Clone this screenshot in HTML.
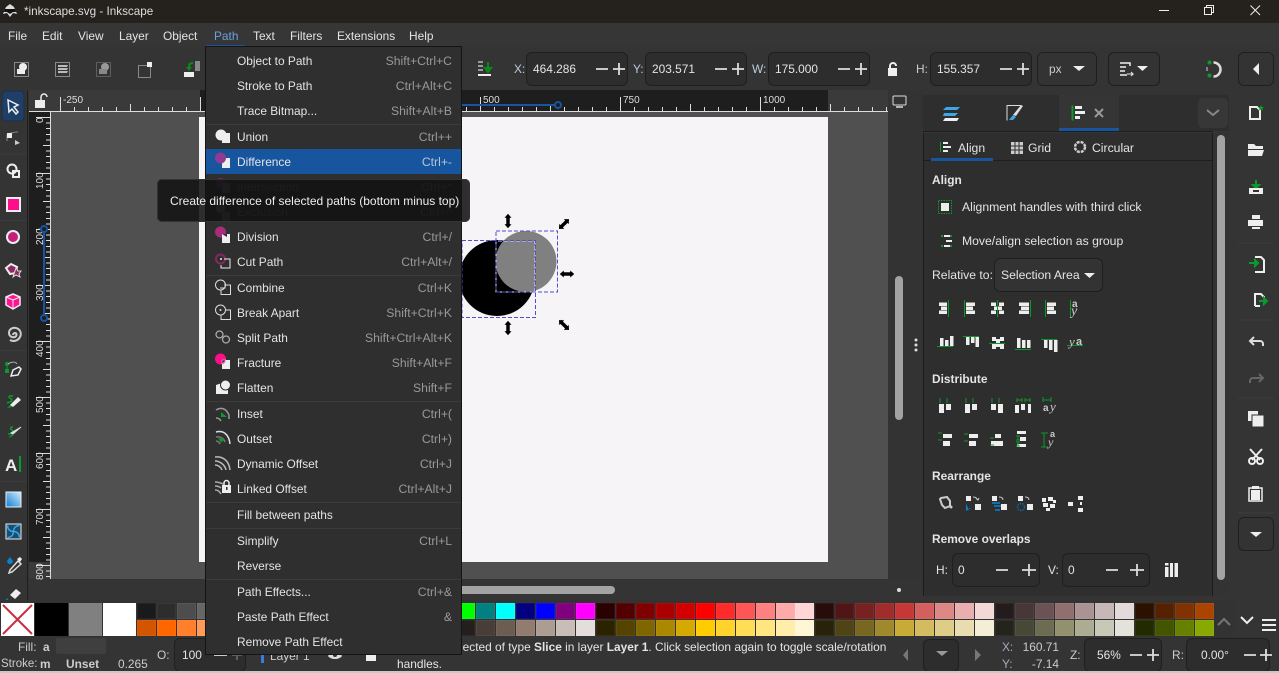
<!DOCTYPE html>
<html><head><meta charset="utf-8"><title>Inkscape</title>
<style>
html,body{margin:0;padding:0;background:#333}
#r{position:relative;width:1279px;height:673px;overflow:hidden;background:#343434;font-family:"Liberation Sans",sans-serif;font-size:11.9px;color:#e4e4e4}
#r div{position:absolute}
.t{position:absolute;white-space:nowrap;line-height:16px;height:16px}
.p{font-size:12.2px}
.s{position:absolute;white-space:nowrap;line-height:16px;height:16px;right:827px;color:#999;font-size:12.2px}
.b{font-weight:bold}
.box{border:1px solid #1f1f1f;border-radius:6px;box-sizing:border-box;background:#2d2d2d}
.sw{display:flex;gap:.96px}
.sw i{display:block;width:19px;height:16px;flex:none;box-shadow:inset 0 0 0 1px rgba(255,255,255,.05)}
svg{position:absolute;left:0;top:0}
.sp{background:#3b3b3b;height:1px;left:206px;width:255px}
</style></head><body><div id="r">

<div style="left:0;top:0;width:1279px;height:23px;background:#25221e"></div>
<div style="left:0;top:23px;width:1279px;height:24px;background:#363636"></div>
<div style="left:0;top:47px;width:1279px;height:43px;background:#343434"></div>

<div style="left:29px;top:90px;width:894px;height:490px;background:#333"></div>
<div style="left:51px;top:112px;width:837px;height:467px;background:#505050"></div>
<div style="left:199px;top:117px;width:629px;height:445px;background:#f6f4f6"></div>
<div style="left:29px;top:90px;width:859px;height:21px;background:#3a3a3a"></div>
<div style="left:200px;top:90px;width:628px;height:21px;background:#1e1e1e"></div>
<div style="left:29px;top:112px;width:22px;height:450px;background:#1e1e1e"></div>
<div style="left:29px;top:562px;width:22px;height:17px;background:#3a3a3a"></div>
<div style="left:29px;top:111px;width:859px;height:1px;background:#ddd"></div>
<div style="left:50px;top:112px;width:1px;height:467px;background:#ddd"></div>
<div style="left:60px;top:107px;width:828px;height:4px;background:repeating-linear-gradient(90deg,#ddd 0 1px,transparent 1px 14px)"></div>
<div style="left:60px;top:104px;width:828px;height:7px;background:repeating-linear-gradient(90deg,#ddd 0 1px,transparent 1px 70px)"></div>
<div style="left:60px;top:97px;width:828px;height:14px;background:repeating-linear-gradient(90deg,#ddd 0 1px,transparent 1px 140px)"></div>
<div style="left:46px;top:117px;width:4px;height:462px;background:repeating-linear-gradient(180deg,#ddd 0 1px,transparent 1px 5.6px)"></div>
<div style="left:43px;top:117px;width:7px;height:462px;background:repeating-linear-gradient(180deg,#ddd 0 1px,transparent 1px 28px)"></div>
<div style="left:36px;top:117px;width:14px;height:462px;background:repeating-linear-gradient(180deg,#ddd 0 1px,transparent 1px 56px)"></div>

<div class="t" style="left:63px;top:93px;font-size:10px;color:#ddd">-250</div>
<div class="t" style="left:483px;top:93px;font-size:10px;color:#ddd">500</div>
<div class="t" style="left:623px;top:93px;font-size:10px;color:#ddd">750</div>
<div class="t" style="left:763px;top:93px;font-size:10px;color:#ddd">1000</div>

<svg width="1279" height="673" viewBox="0 0 1279 673" font-family="Liberation Sans,sans-serif">
 <g font-size="10" fill="#ddd">
  <text transform="translate(43,123) rotate(-90)">0</text>
  <text transform="translate(43,189) rotate(-90)">100</text>
  <text transform="translate(43,245) rotate(-90)">200</text>
  <text transform="translate(43,301) rotate(-90)">300</text>
  <text transform="translate(43,357) rotate(-90)">400</text>
  <text transform="translate(43,413) rotate(-90)">500</text>
  <text transform="translate(43,469) rotate(-90)">600</text>
  <text transform="translate(43,525) rotate(-90)">700</text>
  <text transform="translate(43,580) rotate(-90)">800</text>
 </g>
 <path d="M461 105H556" stroke="#17559f" stroke-width="2"/><circle cx="558" cy="105" r="3" fill="#1e1e1e" stroke="#17559f" stroke-width="2"/>
 <path d="M44 231V316" stroke="#17559f" stroke-width="2"/><circle cx="44" cy="318" r="3" fill="#1e1e1e" stroke="#17559f" stroke-width="2"/><circle cx="44" cy="229" r="3" fill="#1e1e1e" stroke="#17559f" stroke-width="2"/>

 <!-- drawing -->
 <circle cx="497" cy="278" r="38" fill="#000"/>
 <circle cx="526" cy="261.500" r="30.500" fill="#808080"/>
 <path d="M496 241V292H535V241Z" fill="none" stroke="#ddd" stroke-width="1" stroke-dasharray="4 2"/>
 <rect x="496" y="231" width="61.500" height="61" fill="none" stroke="#4f4fd0" stroke-dasharray="4 2"/>
 <rect x="462" y="240.500" width="73.500" height="77" fill="none" stroke="#4f4fd0" stroke-dasharray="4 2"/>
 <g fill="#000" stroke="#fff" stroke-width=".5">
  <path transform="translate(508,221)" d="M0-7.500L4-3H2V3H4L0 7.500-4 3H-2V-3H-4Z"/>
  <path transform="translate(508,328)" d="M0-7.500L4-3H2V3H4L0 7.500-4 3H-2V-3H-4Z"/>
  <path transform="translate(567,274) rotate(90)" d="M0-7.500L4-3H2V3H4L0 7.500-4 3H-2V-3H-4Z"/>
  <path transform="translate(564,224) rotate(45)" d="M0-7.500L4-3H2V3H4L0 7.500-4 3H-2V-3H-4Z"/>
  <path transform="translate(564,325) rotate(-45)" d="M0-7.500L4-3H2V3H4L0 7.500-4 3H-2V-3H-4Z"/>
 </g>

 <!-- title -->
 <path d="M10 4l4 3 3 7-4-1-3 4-3-4-4 1 3-7z" fill="#ddd"/><path d="M5 9h10l1 3-3 0-3 2-3-2-3 0z" fill="#111"/>
 <path d="M1159 10.500h10" stroke="#eee" stroke-width="1"/>
 <path d="M1204.500 7.500h7v7h-7zM1206.500 7V5.500h7v7H1212" fill="none" stroke="#eee"/>
 <path d="M1250.500 5.500l9.500 9.500M1260 5.500l-9.500 9.500" stroke="#eee"/>
 <!-- menu underline -->
 <rect x="206" y="45" width="39" height="2" fill="#17559f"/>

 <!-- top toolbar -->
 <g fill="none" stroke="#ddd" stroke-dasharray="1 1"><rect x="14.500" y="62.500" width="14" height="14"/><rect x="55.500" y="62.500" width="14" height="14"/><rect x="96.500" y="62.500" width="14" height="14" stroke="#888"/><rect x="138.500" y="65.500" width="12" height="12"/></g>
 <circle cx="23" cy="67" r="4" fill="#eee"/><rect x="17" y="69" width="8" height="5" fill="#eee"/>
 <path d="M58 65h10l-1 2H58zM58 68h10l-1 2H58zM58 71h10l-1 2H58z" fill="#bbb"/>
 <circle cx="105" cy="67" r="4" fill="#999"/><rect x="99" y="69" width="8" height="5" fill="#888"/>
 <rect x="147" y="62" width="5" height="5" fill="#eee"/>
 <rect x="195" y="61" width="5" height="10" fill="#888"/><rect x="184" y="72" width="10" height="5" fill="#eee"/><path d="M193 62c-3 0-5 1-5 5h-2l3 4 3-4h-2c0-2 1-3 3-3z" fill="#0a8a1a"/>
 <path d="M478 62h5M478 66h5M478 70h5" stroke="#999" stroke-width="2"/><rect x="478" y="74" width="13" height="2" fill="#eee"/><path d="M488 62v6M485 68h6l-3 4z" stroke="#0a8a1a" fill="#0a8a1a" stroke-width="2"/>
 <path d="M890 68v-2a3 3 0 016 0" fill="none" stroke="#eee" stroke-width="2"/><rect x="888" y="68" width="9" height="8" fill="#eee"/>
 <path d="M1213.500 62.500a7 7 0 010 14" fill="none" stroke="#ddd" stroke-width="2.500"/><circle cx="1209.500" cy="62.500" r="2" fill="#0a9a2a"/><circle cx="1209.500" cy="75.500" r="2" fill="#0a9a2a"/><path d="M1207 67v4" stroke="#ccc"/>
 <!-- canvas right icons -->
 <rect x="893" y="96" width="13" height="9" rx="1" fill="none" stroke="#ddd"/><path d="M896 107h7" stroke="#ddd" stroke-width="1.500"/>
 <!-- lock on ruler -->
 <path d="M41 100v-3a3 3 0 016 0" fill="none" stroke="#eee" stroke-width="1.500"/><rect x="35" y="100" width="10" height="8" fill="#eee"/>

 <!-- left tools -->
 <rect x="2" y="91" width="22" height="30" rx="4" fill="#1f3f66" stroke="#1a2f4a"/>
 <path d="M8 100l10 5-4 2 4 5-2 2-4-5-3 3z" fill="#16416f" stroke="#eee" stroke-width="1.500"/>
 <path d="M7 141v-6c3-2 7-3 11-3" fill="none" stroke="#888"/><rect x="7" y="133" width="5" height="5" fill="#eee"/><path d="M15 140l5 3-5 2z" fill="#ccc"/>
 <circle cx="12" cy="169" r="4.500" fill="none" stroke="#eee" stroke-width="2"/><rect x="13" y="171" width="6" height="6" fill="none" stroke="#eee" stroke-width="2"/>
 <rect x="7" y="198" width="13" height="13" fill="#ff0d8a" stroke="#eee" stroke-width="2"/>
 <circle cx="13" cy="237" r="6" fill="#c81e7a" stroke="#eee" stroke-width="2"/>
 <path d="M6 268l5-4 6 3-1 6-6 1z" fill="#8f2a64" stroke="#eee" stroke-width="2"/><path d="M16 268l2 3h3l-2 3 1 3-4-2-3 2 1-3z" fill="#8f2a64" stroke="#ddd"/>
 <path d="M13 294l7 3v8l-7 4-7-4v-8z" fill="#ff1493" stroke="#eee" stroke-width="1.500"/><path d="M6 297l7 3 7-3M13 300v9" stroke="#eee" fill="none"/>
 <path d="M13 335a2 2 0 012-2c2 0 2 3 0 4-3 1-6-1-6-4 0-4 4-6 7-5 4 1 6 5 4 9-2 4-7 5-10 3" fill="none" stroke="#ccc" stroke-width="2"/>
 <g>
  <circle cx="7" cy="364" r="2" fill="#0a9a2a"/><rect x="5" y="369" width="4" height="4" fill="#0a9a2a"/><path d="M7 365v5" stroke="#0a9a2a"/><path d="M8 364c4-3 8-2 9 0" stroke="#aaa" fill="none"/>
  <path d="M11 376l2-6 6-3 2 2-3 6z" fill="#333" stroke="#eee" stroke-width="1.500"/>
  <path d="M13 396c-4-1-5 1-3 2s3 3 0 4l-3 1" stroke="#0a9a2a" fill="none" stroke-width="1.500"/><path d="M10 405l8-8 3 3-8 7z" fill="#eee"/><path d="M7 408l3-3 3 2z" fill="#0a9a2a"/>
  <path d="M13 427c-3 0-3 2-1 3s0 4-4 4" stroke="#0a9a2a" fill="none" stroke-width="1.500"/><path d="M21 427l-8 7-2-1z" fill="#ddd" stroke="#ddd"/><path d="M8 438l4-4 1 2z" fill="#0a9a2a"/>
 </g>
 <text x="5" y="471" font-size="17" font-weight="bold" fill="#eee">A</text><rect x="19" y="456" width="2" height="16" fill="#0a9a2a"/>
 <defs><linearGradient id="g" x1="0" y1="1" x2="1" y2="0"><stop offset="0" stop-color="#0d7fd6"/><stop offset="1" stop-color="#d4ecfb"/></linearGradient></defs>
 <rect x="6" y="492" width="15" height="15" fill="url(#g)" stroke="#eee"/>
 <rect x="6" y="524" width="15" height="15" fill="#1a4d6e" stroke="#eee"/><path d="M13.500 531.500c0-4 3-6 6-6M13.500 531.500c4 0 6 3 6 6M13.500 531.500c0 4-3 6-6 6M13.500 531.500c-4 0-6-3-6-6" stroke="#3aa8e8" fill="none" stroke-width="1.500"/>
 <path d="M10 557l3 4a3 3 0 01-6 0z" fill="#0a82d4"/><path d="M10 570l8-9 3 3-9 8-3 1z" fill="#333" stroke="#ddd" stroke-width="1.500"/><path d="M17 559l3-2 2 2-2 3z" fill="#eee"/>
 <path d="M10 595l6-6 5 4-6 6z" fill="#eee"/><path d="M7 598l3 4H5z" fill="#0a82d4"/>
 <g stroke="#3c3c3c"><path d="M0 154h27M0 220.500h27M0 350.500h27M0 481.500h27"/></g>
 <path d="M27.500 90V601" stroke="#1f1f1f"/>

 <!-- scrollbars -->
 <rect x="895" y="276" width="8" height="144" rx="4" fill="#a3a3a3"/>
 <rect x="450" y="586" width="165" height="8" rx="4" fill="#a3a3a3"/>
 <circle cx="899" cy="590" r="2" fill="#ddd"/>
 <g fill="#ddd"><circle cx="916" cy="340" r="1.500"/><circle cx="916" cy="345" r="1.500"/><circle cx="916" cy="350" r="1.500"/></g>
</svg>

<!-- right dock -->
<div style="left:923px;top:95px;width:306px;height:36px;background:#2e2e2e"></div>
<div style="left:1059px;top:95px;width:60px;height:33px;background:#353535"></div>
<div style="left:1059px;top:128px;width:60px;height:3px;background:#17559f"></div>
<div style="left:1198px;top:98px;width:30px;height:30px;background:#373737;border-radius:5px"></div>
<div style="left:923px;top:131px;width:290px;height:1px;background:#1e1e1e"></div>
<div style="left:923px;top:133px;width:290px;height:463px;background:#2e2e2e;border-left:1px solid #1c1c1c;border-right:1px solid #1c1c1c;box-sizing:border-box"></div>
<div style="left:924px;top:160px;width:288px;height:1px;background:#1e1e1e"></div>
<div style="left:931px;top:158px;width:62px;height:3px;background:#17559f"></div>
<div style="left:1213px;top:133px;width:16px;height:463px;background:#333"></div>
<div style="left:1217px;top:135px;width:8px;height:445px;border-radius:4px;background:#a3a3a3"></div>

<div class="t p" style="left:958px;top:140px">Align</div>
<div class="t p" style="left:1028px;top:140px">Grid</div>
<div class="t p" style="left:1092px;top:140px">Circular</div>
<div class="t b" style="left:932px;top:172px">Align</div>
<div class="t p" style="left:962px;top:199px">Alignment handles with third click</div>
<div class="t p" style="left:962px;top:233px">Move/align selection as group</div>
<div class="t p" style="left:932px;top:267px">Relative to:</div>
<div class="box" style="left:994px;top:258px;width:109px;height:34px;background:#333"></div>
<div class="t p" style="left:1001px;top:267px">Selection Area</div>
<div class="t b" style="left:932px;top:371px">Distribute</div>
<div class="t b" style="left:932px;top:468px">Rearrange</div>
<div class="t b" style="left:932px;top:531px">Remove overlaps</div>
<div class="t" style="left:936px;top:562px">H:</div>
<div class="box" style="left:952px;top:553px;width:88px;height:34px"></div>
<div class="t" style="left:958px;top:562px">0</div>
<div class="t" style="left:1048px;top:562px">V:</div>
<div class="box" style="left:1062px;top:553px;width:88px;height:34px"></div>
<div class="t" style="left:1068px;top:562px">0</div>

<!-- toolbar boxes -->
<div class="t" style="left:514px;top:61px;color:#bcd">X:</div>
<div class="box" style="left:526px;top:52px;width:102px;height:34px"></div>
<div class="t" style="left:533px;top:61px">464.286</div>
<div class="t" style="left:633px;top:61px;color:#bcd">Y:</div>
<div class="box" style="left:645px;top:52px;width:102px;height:34px"></div>
<div class="t" style="left:652px;top:61px">203.571</div>
<div class="t" style="left:752px;top:61px;color:#bcd">W:</div>
<div class="box" style="left:768px;top:52px;width:102px;height:34px"></div>
<div class="t" style="left:775px;top:61px">175.000</div>
<div class="t" style="left:916px;top:61px;color:#ccc">H:</div>
<div class="box" style="left:930px;top:52px;width:102px;height:34px"></div>
<div class="t" style="left:937px;top:61px">155.357</div>
<div class="box" style="left:1037px;top:52px;width:60px;height:34px;background:#333"></div>
<div class="t" style="left:1049px;top:61px;color:#ccc">px</div>
<div class="box" style="left:1108px;top:52px;width:52px;height:34px;background:#333"></div>
<div class="box" style="left:1238px;top:52px;width:36px;height:34px;background:#333"></div>
<div class="box" style="left:1238px;top:517px;width:36px;height:34px;background:#333"></div>

<!-- swatches -->
<div style="left:0;top:600px;width:1235px;height:37px;background:#333"></div>
<div style="left:1px;top:603px;width:33px;height:33px;background:#fff"></div>
<div style="left:35px;top:603px;width:33px;height:33px;background:#000"></div>
<div style="left:69px;top:603px;width:33px;height:33px;background:#808080"></div>
<div style="left:103px;top:603px;width:33px;height:33px;background:#fff"></div>
<div class="sw" style="left:137px;top:603px"><i style="background:#1a1a1a"></i><i style="background:#2d2d2d"></i><i style="background:#4d4d4d"></i><i style="background:#666"></i><i style="background:#808080"></i><i style="background:#999"></i><i style="background:#b3b3b3"></i><i style="background:#ccc"></i><i style="background:#e6e6e6"></i><i style="background:#f00"></i><i style="background:#f00"></i><i style="background:#f00"></i><i style="background:#f00"></i><i style="background:#f00"></i><i style="background:#f00"></i><i style="background:#f00"></i><i style="background:#0f0"></i><i style="background:#008080"></i><i style="background:#0ff"></i><i style="background:#000080"></i><i style="background:#00f"></i><i style="background:#800080"></i><i style="background:#f0f"></i><i style="background:#2b0000"></i><i style="background:#500"></i><i style="background:#800000"></i><i style="background:#a00"></i><i style="background:#d40000"></i><i style="background:#f00"></i><i style="background:#ff2a2a"></i><i style="background:#f55"></i><i style="background:#ff8080"></i><i style="background:#faa"></i><i style="background:#ffd5d5"></i><i style="background:#280b0b"></i><i style="background:#501616"></i><i style="background:#782121"></i><i style="background:#a02c2c"></i><i style="background:#c83737"></i><i style="background:#d35f5f"></i><i style="background:#de8787"></i><i style="background:#e9afaf"></i><i style="background:#f4d7d7"></i><i style="background:#241c1c"></i><i style="background:#483737"></i><i style="background:#6c5353"></i><i style="background:#916f6f"></i><i style="background:#ac9393"></i><i style="background:#c8b7b7"></i><i style="background:#e3dbdb"></i><i style="background:#2b1100"></i><i style="background:#520"></i><i style="background:#803300"></i><i style="background:#a40"></i></div>
<div class="sw" style="left:137px;top:620px"><i style="background:#d45500"></i><i style="background:#f60"></i><i style="background:#ff7f2a"></i><i style="background:#f95"></i><i style="background:#fa7"></i><i style="background:#fb8"></i><i style="background:#fc9"></i><i style="background:#fda"></i><i style="background:#fec"></i><i style="background:#333"></i><i style="background:#333"></i><i style="background:#333"></i><i style="background:#333"></i><i style="background:#333"></i><i style="background:#333"></i><i style="background:#333"></i><i style="background:#241f1c"></i><i style="background:#483e37"></i><i style="background:#6c5d53"></i><i style="background:#917c6f"></i><i style="background:#ac9d93"></i><i style="background:#c8beb7"></i><i style="background:#e3dedb"></i><i style="background:#2b2200"></i><i style="background:#540"></i><i style="background:#806600"></i><i style="background:#a80"></i><i style="background:#d4aa00"></i><i style="background:#fc0"></i><i style="background:#ffd42a"></i><i style="background:#fd5"></i><i style="background:#ffe680"></i><i style="background:#fea"></i><i style="background:#fff6d5"></i><i style="background:#28220b"></i><i style="background:#504416"></i><i style="background:#786721"></i><i style="background:#a0892c"></i><i style="background:#c8ab37"></i><i style="background:#d3bc5f"></i><i style="background:#decd87"></i><i style="background:#e9ddaf"></i><i style="background:#f4eed7"></i><i style="background:#24241c"></i><i style="background:#484837"></i><i style="background:#6c6c53"></i><i style="background:#91916f"></i><i style="background:#acac93"></i><i style="background:#c8c8b7"></i><i style="background:#e3e3db"></i><i style="background:#222b00"></i><i style="background:#450"></i><i style="background:#668000"></i><i style="background:#8a0"></i></div>

<!-- status -->
<div class="t" style="left:18px;top:639px;color:#ccc">Fill:</div>
<div class="t b" style="left:43px;top:639px;color:#ccc">a</div>
<div style="left:56px;top:638px;width:50px;height:16px;background:#3f3f3f;border-radius:2px"></div>
<div class="t" style="left:1px;top:656px;color:#ccc;font-size:11.5px">Stroke:</div>
<div class="t b" style="left:40px;top:656px;color:#ccc">m</div>
<div class="t b" style="left:66px;top:656px;color:#ccc">Unset</div>
<div class="t" style="left:118px;top:656px;color:#ccc">0.265</div>
<div class="t" style="left:157px;top:647px;color:#ccc">O:</div>
<div class="box" style="left:174px;top:638px;width:72px;height:34px"></div>
<div class="t" style="left:182px;top:647px">100</div>
<div style="left:261px;top:650px;width:3px;height:13px;background:#3a7be0"></div>
<div class="t" style="left:270px;top:648px;color:#ccc">Layer 1</div>
<div class="t" style="left:397px;top:656px">handles.</div>
<div class="t" style="left:460px;top:639px">lected of type <span class="b">Slice</span> in layer <span class="b">Layer 1</span>. Click selection again to toggle scale/rotation</div>
<div class="box" style="left:923px;top:639px;width:36px;height:33px"></div>
<div class="t" style="left:1002px;top:639px;color:#aab">X:</div>
<div class="t" style="left:1002px;top:656px;color:#aab">Y:</div>
<div class="t" style="right:220px;top:639px;color:#ccc">160.71</div>
<div class="t" style="right:220px;top:656px;color:#ccc">-7.14</div>
<div class="t" style="left:1070px;top:647px;color:#ccc">Z:</div>
<div class="box" style="left:1084px;top:638px;width:78px;height:34px"></div>
<div class="t" style="left:1097px;top:647px">56%</div>
<div class="t" style="left:1172px;top:647px;color:#ccc">R:</div>
<div class="box" style="left:1186px;top:638px;width:84px;height:34px"></div>
<div class="t" style="left:1201px;top:647px">0.00°</div>
<div style="left:0;top:671px;width:1279px;height:2px;background:#c8c8c8"></div>

<!-- icons over boxes -->
<svg width="1279" height="673" viewBox="0 0 1279 673" font-family="Liberation Serif,serif">
 <!-- none swatch -->
 <path d="M3 605l29 29M32 605l-29 29" stroke="#c8303f" stroke-width="2"/>
 <!-- spin +/- -->
 <g stroke="#ddd" stroke-width="1.800" fill="none">
  <path d="M596 69h12M619 63v12M613 69h12M715 69h12M738 63v12M732 69h12M838 69h12M861 63v12M855 69h12M1000 69h12M1023 63v12M1017 69h12"/>
  <path d="M996 570h12M1029 564v12M1022 570h14M1106 570h12M1137 564v12M1130 570h14"/>
  <path d="M1130 655h12M1153 649v12M1147 655h12M1244 655h12M1266 649v12M1260 655h12"/>
  <path d="M214 655h13"/><path d="M237 650v10M232 655h10" stroke="#666"/>
 </g>
 <path d="M1084 273h11l-5.500 5z" fill="#eee"/>
 <path d="M1250 532h12l-6 5z" fill="#eee"/>
 <path d="M1073 66h12l-6 5z" fill="#eee"/>
 <path d="M1120 63h10v3M1120 67h6M1120 71h5M1120 75h7" stroke="#eee" stroke-width="1.500" fill="none"/><path d="M1127 74h6l-2-2m2 2l-2 2" stroke="#eee" fill="none"/>
 <path d="M1137 66h11l-5.500 5z" fill="#eee"/>
 <path d="M1259 63v12l-6-6z" fill="#eee"/>
 <path d="M936 651h12l-6 5z" fill="#999"/>
 <path d="M908 649v12l-5-6zM975 649v12l6-6z" fill="#777"/>
 <!-- swatch nav -->
 <path d="M1218 625l6-6 6 6" stroke="#777" stroke-width="2" fill="none"/>
 <path d="M1241 617l6 6 6-6" stroke="#eee" stroke-width="2" fill="none"/>
 <path d="M1262 620h14M1262 625h14M1262 630h14" stroke="#eee" stroke-width="2"/>
 <!-- dock tabs -->
 <path d="M946 107h14l-3 3h-14zM944 113h14l-3 3h-12z" fill="#3aa8e8"/><path d="M945 118h14l-2 3h-14z" fill="#eee"/>
 <path d="M1021 105.500h-14v15" stroke="#ddd" fill="none"/><path d="M1013 115l8-10 2 1-7 10z" fill="#ddd"/><path d="M1009 120l4-5 3 2-3 3z" fill="#3aa8e8"/>
 <rect x="1072" y="106" width="1" height="14" fill="#0a9a2a" stroke="#0a9a2a"/><path d="M1075 106h7v3h-7zM1075 111h10v3h-10zM1075 116h5v3h-5z" fill="#eee"/>
 <path d="M1095 109l8 8M1103 109l-8 8" stroke="#999" stroke-width="2"/>
 <path d="M1207 110l6 5 6-5" stroke="#888" stroke-width="2" fill="none"/>
 <!-- subtabs -->
 <rect x="940" y="142" width="1" height="10" fill="#0a9a2a"/><path d="M943 142h5v2h-5zM943 146h8v2h-8zM943 150h5v2h-5z" fill="#eee"/>
 <path d="M1011 142h12v12h-12z" fill="#ccc"/><path d="M1015 142v12M1019 142v12M1011 146h12M1011 150h12" stroke="#2e2e2e"/>
 <circle cx="1080" cy="147" r="5" fill="none" stroke="#ccc" stroke-width="2.500" stroke-dasharray="3 1"/>
 <!-- align checks -->
 <rect x="938.500" y="200.500" width="13" height="13" fill="none" stroke="#0a9a2a" stroke-dasharray="1.500 1"/><rect x="941" y="203" width="8" height="8" fill="#eee"/>
 <path d="M941 236h2M950 236h2M941 246h2M950 246h2" stroke="#0a9a2a" stroke-width="2"/><path d="M944 236h6M946 241h6M944 246h6" stroke="#eee" stroke-width="2"/>
 <!-- align row 1 -->
 <g fill="#eee">
  <path d="M939 302.500h8v3.500h-8zM941 306.500h6v3.500h-6zM939 310.500h8v3.500h-8z"/>
  <path d="M966 302.500h9v3.500h-9zM966 306.500h7v3.500h-7zM966 310.500h9v3.500h-9z"/>
  <path d="M991 302.500h5v3.500h-5zM999 302.500h5v3.500h-5zM994 306.500h8v3.500h-8zM991 310.500h5v3.500h-5zM999 310.500h5v3.500h-5z"/>
  <path d="M1019 302.500h10v3.500h-10zM1021 306.500h8v3.500h-8zM1019 310.500h10v3.500h-10z"/>
  <path d="M1047 302.500h9v3.500h-9zM1047 306.500h7v3.500h-7zM1047 310.500h9v3.500h-9z"/>
  <path d="M940 338h3.500v8h-3.500zM945 340h3.500v6h-3.500zM950 336h3.500v10h-3.500z"/><path d="M966 337h3.500v8h-3.500zM971 337h3.500v6h-3.500zM975.500 337h3.500v10h-3.500z"/>
  <path d="M992 337h4v4h-4zM1000 337h4v4h-4zM992 344h4v5h-4zM1000 344h4v5h-4zM996 339h4v8h-4z"/><path d="M1017 338h3.500v10h-3.500zM1022 340h3.500v8h-3.500zM1027 340h3.500v8h-3.500z"/>
  <path d="M1044 340h3.500v8h-3.500zM1049 340h3.500v10h-3.500zM1054 340h3.500v12h-3.500z"/>
 </g>
 <g fill="#0a9a2a"><rect x="948" y="300" width="1" height="17"/><rect x="964" y="300" width="1" height="17"/><rect x="997" y="300" width="1" height="17"/><rect x="1030" y="300" width="1" height="17"/><rect x="1045" y="300" width="1" height="17"/><rect x="1070" y="300" width="1" height="17"/>
  <rect x="937" y="346" width="16" height="1"/><rect x="963" y="336" width="16" height="1"/><rect x="989" y="343" width="16" height="1"/><rect x="1015" y="349" width="16" height="1"/><rect x="1041" y="339" width="16" height="1"/><rect x="1067" y="345" width="16" height="1"/></g>
 <text x="1072" y="307" font-size="10" font-weight="bold" fill="#ccc" font-family="Liberation Sans">a</text><text x="1071" y="315" font-size="14" font-style="italic" fill="#ccc">y</text>
 <text x="1069" y="346" font-size="13" font-style="italic" fill="#ccc">y</text><text x="1076" y="345" font-size="11" font-weight="bold" fill="#ccc" font-family="Liberation Sans">a</text>
 <!-- distribute -->
 <g fill="#eee">
  <path d="M939 404h5v9h-5zM946 404h5v6h-5zM965 404h5v9h-5zM972 404h5v6h-5zM991 404h5v6h-5zM998 404h5v9h-5zM1015 405h4v8h-4zM1021 404h4v6h-4zM1028 404h3v9h-3z"/>
  <path d="M943 434h9v4h-9zM943 441h7v5h-7zM969 434h9v4h-9zM969 441h7v5h-7zM995 434h6v4h-6zM991 441h12v5h-12zM1017 431h9v3h-9zM1020 437h6v4h-6zM1017 444h9v3h-9z"/>
 </g>
 <g stroke="#0a9a2a" fill="none"><path d="M940 398v5M947 398v5M966 398v5M973 398v5M992 398v5M999 398v5M1017 400h5M1017 398v4M1022 398v4M1025 400h5M1025 398v4M1030 398v4M1043 400h8M1043 397v5M1051 397v5"/>
  <path d="M938 433h4M938 440h4M964 434h4M964 441h4M990 438h4M990 445h4M1018 436v4M1016 436h4M1016 440h4M1018 442v4M1016 442h4M1016 446h4M1041 433h7M1041 447h7M1044 433v14"/></g>
 <text x="1043" y="411" font-size="10" font-weight="bold" fill="#ccc" font-family="Liberation Sans">a</text><text x="1050" y="411" font-size="13" font-style="italic" fill="#ccc">y</text>
 <text x="1050" y="437" font-size="9" font-weight="bold" fill="#ccc" font-family="Liberation Sans">a</text><text x="1048" y="446" font-size="12" font-style="italic" fill="#ccc">y</text>
 <!-- rearrange -->
 <path d="M941 498l6-1 3 4 0 5-5 2-3-3-2-6z" fill="none" stroke="#ccc" stroke-width="2"/><circle cx="951" cy="507" r="1.500" fill="#ccc"/>
 <g fill="#eee">
  <path d="M966 496h5v5h-5zM975 504h6v6h-6zM992 496h5v5h-5zM1001 504h6v6h-6zM1018 496h5v5h-5zM1027 504h6v6h-6z"/>
  <path d="M1042 498h4v4h-4zM1048 497h5v4h-5zM1053 500h3v3h-3zM1043 503h5v4h-5zM1050 504h5v4h-5zM1046 508h4v3h-4z"/>
  <path d="M1068 502h5v4h-5zM1078 496h5v4h-5zM1078 508h5v4h-5zM1080 502h2v3h-2z"/>
 </g>
 <path d="M966 503l5 5-2 0 0 3z M966 503v8l5-3z" fill="#0a82d4"/>
 <path d="M992 503h8M994 506h7M995 510h5" stroke="#0a82d4" stroke-width="1.500"/>
 <circle cx="1021" cy="507" r="3.500" fill="none" stroke="#0a6aa8" stroke-width="1.500" stroke-dasharray="1.500 1"/>
 <path d="M973 497c3 0 4 1 4 3M976 498l2 2 1-2M999 497c3 0 4 1 4 3M1025 497c3 0 4 1 4 3" stroke="#ccc" fill="none"/>
 <path d="M1165 567h3.500v10h-3.500zM1165 563h3.500v2.500h-3.500zM1170 563h3v14h-3zM1174.500 563h3.500v14h-3.500z" fill="#eee"/>
 <!-- right toolbar -->
 <path d="M1250 107h7l3 3v9h-10z" fill="none" stroke="#eee" stroke-width="2"/><path d="M1261 105l1 2h2l-1.500 1.500.5 2-2-1-2 1 .5-2L1258 107h2z" fill="#0a9a2a"/>
 <path d="M1248 144h6l2 2h7v3h-15z M1248 150h16l-2 6h-14z" fill="#eee"/>
 <path d="M1256 180v6M1253 185h6l-3 3z" stroke="#0a9a2a" fill="#0a9a2a" stroke-width="2"/><path d="M1249 188h14v6h-14z" fill="#eee"/><rect x="1253" y="190" width="6" height="2" fill="#333"/>
 <path d="M1252 215h8v4h-8zM1248 220h15v6h-15zM1252 227h8v2h-8z" fill="#eee"/>
 <path d="M1255 257h6l3 3v12h-9" fill="none" stroke="#eee" stroke-width="2"/><path d="M1249 263h8M1255 260v6l3-3z" stroke="#0a9a2a" stroke-width="2" fill="#0a9a2a"/>
 <path d="M1255 306V294h6l3 3v3M1255 306h5" fill="none" stroke="#eee" stroke-width="2"/><path d="M1259 301h7M1264 298v6l3-3z" stroke="#0a9a2a" stroke-width="2" fill="#0a9a2a"/>
 <path d="M1263 346v-2a3 3 0 00-3-3h-10M1254 337l-4 4 4 4" fill="none" stroke="#ddd" stroke-width="2"/>
 <path d="M1250 383v-2a3 3 0 013-3h10M1259 374l4 4-4 4" fill="none" stroke="#666" stroke-width="2"/>
 <rect x="1248" y="411" width="10" height="10" fill="#eee"/><rect x="1252" y="415" width="12" height="12" fill="#eee" stroke="#333"/>
 <path d="M1250 449l10 11M1262 449l-10 11" stroke="#eee" stroke-width="2"/><circle cx="1252" cy="461" r="3" fill="none" stroke="#eee" stroke-width="2"/><circle cx="1260" cy="461" r="3" fill="none" stroke="#eee" stroke-width="2"/>
 <rect x="1249" y="488" width="13" height="13" fill="none" stroke="#eee" stroke-width="1.500"/><rect x="1251" y="490" width="9" height="10" fill="#eee"/><rect x="1252" y="486" width="7" height="3" fill="#eee"/>
 <g stroke="#3c3c3c"><path d="M1238 243h36M1238 320h36M1238 398h36M1238 513h36"/></g>
 <!-- eye / lock in status -->
 <path d="M328 656c3-5 11-5 14 0-3 4-11 4-14 0z" fill="#ddd"/><circle cx="335" cy="655" r="2" fill="#333"/>
 <rect x="366" y="652" width="10" height="9" fill="#eee"/>
</svg>

<!-- menu -->
<div style="left:206px;top:47px;width:255px;height:607px;background:#2f2f2f;box-shadow:0 0 0 1px #141414"></div>
<div style="left:206px;top:149px;width:255px;height:25px;background:#17559f"></div>
<div class="sp" style="top:124px"></div><div class="sp" style="top:275px"></div><div class="sp" style="top:401px"></div><div class="sp" style="top:502px"></div><div class="sp" style="top:528px"></div><div class="sp" style="top:579px"></div>

<div class="t" style="left:237px;top:53px">Object to Path</div><div class="s" style="top:53px">Shift+Ctrl+C</div>
<div class="t" style="left:237px;top:78px">Stroke to Path</div><div class="s" style="top:78px">Ctrl+Alt+C</div>
<div class="t" style="left:237px;top:103px">Trace Bitmap...</div><div class="s" style="top:103px">Shift+Alt+B</div>
<div class="t" style="left:237px;top:129px">Union</div><div class="s" style="top:129px">Ctrl++</div>
<div class="t" style="left:237px;top:154px">Difference</div><div class="s" style="top:154px;color:#b4c4dc">Ctrl+-</div>
<div class="t" style="left:237px;top:179px;color:#666">Intersection</div><div class="s" style="top:179px;color:#666">Ctrl+*</div>
<div class="t" style="left:237px;top:204px;color:#666">Exclusion</div><div class="s" style="top:204px;color:#666">Ctrl+^</div>
<div class="t" style="left:237px;top:229px">Division</div><div class="s" style="top:229px">Ctrl+/</div>
<div class="t" style="left:237px;top:254px">Cut Path</div><div class="s" style="top:254px">Ctrl+Alt+/</div>
<div class="t" style="left:237px;top:280px">Combine</div><div class="s" style="top:280px">Ctrl+K</div>
<div class="t" style="left:237px;top:305px">Break Apart</div><div class="s" style="top:305px">Shift+Ctrl+K</div>
<div class="t" style="left:237px;top:330px">Split Path</div><div class="s" style="top:330px">Shift+Ctrl+Alt+K</div>
<div class="t" style="left:237px;top:355px">Fracture</div><div class="s" style="top:355px">Shift+Alt+F</div>
<div class="t" style="left:237px;top:380px">Flatten</div><div class="s" style="top:380px">Shift+F</div>
<div class="t" style="left:237px;top:406px">Inset</div><div class="s" style="top:406px">Ctrl+(</div>
<div class="t" style="left:237px;top:431px">Outset</div><div class="s" style="top:431px">Ctrl+)</div>
<div class="t" style="left:237px;top:456px">Dynamic Offset</div><div class="s" style="top:456px">Ctrl+J</div>
<div class="t" style="left:237px;top:481px">Linked Offset</div><div class="s" style="top:481px">Ctrl+Alt+J</div>
<div class="t" style="left:237px;top:507px">Fill between paths</div>
<div class="t" style="left:237px;top:533px">Simplify</div><div class="s" style="top:533px">Ctrl+L</div>
<div class="t" style="left:237px;top:558px">Reverse</div>
<div class="t" style="left:237px;top:584px">Path Effects...</div><div class="s" style="top:584px">Ctrl+&amp;</div>
<div class="t" style="left:237px;top:609px">Paste Path Effect</div><div class="s" style="top:609px">&amp;</div>
<div class="t" style="left:237px;top:634px">Remove Path Effect</div>

<!-- menu bar text -->
<div class="t" style="left:8px;top:28px">File</div>
<div class="t" style="left:42px;top:28px">Edit</div>
<div class="t" style="left:78px;top:28px">View</div>
<div class="t" style="left:119px;top:28px">Layer</div>
<div class="t" style="left:163px;top:28px">Object</div>
<div class="t" style="left:214px;top:28px;color:#6aa0e0">Path</div>
<div class="t" style="left:253px;top:28px">Text</div>
<div class="t" style="left:290px;top:28px">Filters</div>
<div class="t" style="left:337px;top:28px">Extensions</div>
<div class="t" style="left:409px;top:28px">Help</div>
<div class="t" style="left:24px;top:4px;color:#ddd;font-size:11.7px">*inkscape.svg - Inkscape</div>

<!-- menu icons -->
<svg width="1279" height="673" viewBox="0 0 1279 673">
 <rect x="222" y="133" width="8" height="10" fill="#eee"/><circle cx="221" cy="135" r="5.500" fill="#eee"/>
 <rect x="222" y="158" width="8" height="10" fill="#eee"/><circle cx="220.500" cy="158" r="5.500" fill="#913a94"/>
 <g opacity=".9"><circle cx="220.500" cy="183" r="5" fill="#7c2a70"/><rect x="222" y="183" width="8" height="10" fill="#666"/>
 <circle cx="220.500" cy="208" r="5" fill="#777"/><rect x="222" y="212" width="8" height="9" fill="#666"/></g>
 <circle cx="220.500" cy="232" r="5.500" fill="#a82c7a"/><rect x="222" y="234" width="8" height="9" fill="#eee"/><path d="M222 234h5v3z" fill="#2f2f2f"/>
 <circle cx="220.500" cy="259" r="4.500" fill="#2f2f2f" stroke="#86285e" stroke-width="2"/><circle cx="221" cy="259" r="1" fill="#eee"/><path d="M224 259h6v9h-9v-3" fill="none" stroke="#eee"/>
 <circle cx="220.500" cy="285" r="5" fill="none" stroke="#ddd"/><path d="M225 285h5.500v9.500h-9.500v-5" fill="none" stroke="#ddd"/><path d="M220 288h5v-5" stroke="#ddd" fill="none"/>
 <circle cx="220.500" cy="310" r="5" fill="none" stroke="#ddd"/><circle cx="220.500" cy="310" r="1" fill="#ddd"/><path d="M225 310h5.500v9.500h-9.500v-4" fill="none" stroke="#ddd"/>
 <circle cx="219.500" cy="334.500" r="3.500" fill="none" stroke="#aaa" stroke-width="1.300"/><circle cx="226" cy="339.500" r="3.500" fill="none" stroke="#aaa" stroke-width="1.300"/>
 <rect x="222" y="360" width="8" height="9" fill="#eee"/><circle cx="220.500" cy="359" r="5.500" fill="#ff0d8a"/><path d="M222 360h4l-4 4z" fill="#2f2f2f" stroke="#eee" stroke-width=".5"/>
 <path d="M216 394v-9l6-2v11z" fill="#eee"/><rect x="216" y="387" width="12" height="7" fill="#eee"/><circle cx="225.500" cy="385" r="5" fill="#eee" stroke="#2f2f2f"/>
 <path d="M216 410c5-3 10-2 13 5v4M216 418c2 0 4 1 5 3" fill="none" stroke="#999" stroke-width="1.500"/><path d="M221 412l6 5-6 0z" fill="#0a9a2a"/>
 <path d="M216 432c7-2 13 2 14 12" fill="none" stroke="#ddd" stroke-width="1.500"/><path d="M216 437c5-1 8 2 9 5M216 441c2 0 3 1 4 3" fill="none" stroke="#777" stroke-width="1.500"/><path d="M218 438l6 1-3 4z" fill="#0a9a2a"/>
 <path d="M215 457c7-1 14 3 15 13M215 461c5 0 10 4 11 9M215 465c3 0 6 2 7 5" fill="none" stroke="#bbb" stroke-width="1.500"/>
 <path d="M215 482c4 0 6 1 8 2M215 486c3 0 5 1 6 2M215 490c3 0 4 1 6 4" fill="none" stroke="#aaa" stroke-width="1.500"/><rect x="222" y="485" width="9" height="8" fill="#eee"/><path d="M224 485v-2a2.500 2.500 0 015 0v2" fill="none" stroke="#eee" stroke-width="1.500"/><rect x="226" y="487" width="1.500" height="3" fill="#2f2f2f"/>
</svg>

<!-- tooltip -->
<div style="left:157px;top:179px;width:313px;height:43px;background:rgba(18,18,18,.88);border-radius:5px;box-shadow:inset 0 0 0 1px #333"></div>
<div class="t" style="left:170px;top:193px;color:#eee;font-size:12px">Create difference of selected paths (bottom minus top)</div>
</div></body></html>
